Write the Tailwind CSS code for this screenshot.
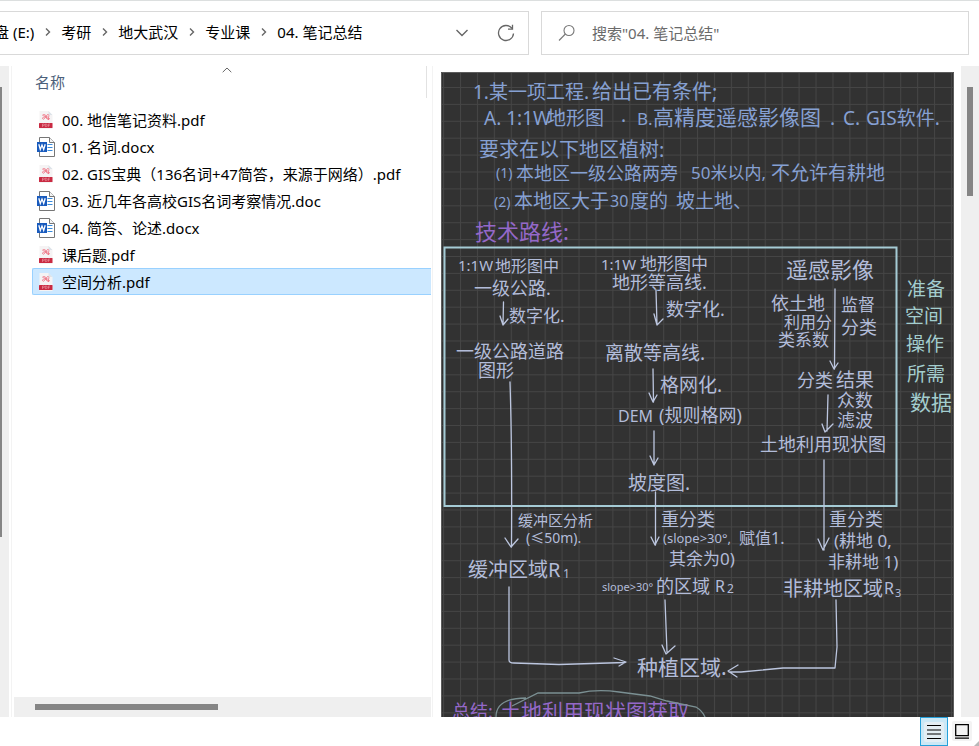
<!DOCTYPE html>
<html lang="zh-CN">
<head>
<meta charset="utf-8">
<meta name="viewport" content="width=device-width, initial-scale=1">
<title>04. 笔记总结</title>
<script src="https://cdn.jsdelivr.net/npm/@tailwindcss/browser@4"></script>
</head>
<body class="flex h-screen flex-col overflow-hidden border-t border-[#dcdfdf] bg-white font-['Noto_Sans','Noto_Sans_CJK_SC',sans-serif] text-[15px] leading-5 text-black">

<svg class="hidden" aria-hidden="true">
  <symbol id="pdf" viewBox="0 0 20 20">
    <path d="M3.500 1h9l4 4v14h-13z" fill="#f5f3f4"/>
    <path d="M12.500 1v4h4z" fill="#dde3e9"/>
    <path d="M6.500 5.500c2-2 4-.5 3 1.500s-2.500 3-3 1.500 3-2 5-1.500 2.500 2.500 1 2.500-3-3-1.500-4.500 2.500.5 1.500 2M7 4.500l5 5M12.500 7.500v2.500" fill="none" stroke="#ee7586" stroke-width=".9"/>
    <rect x="3" y="13" width="13.500" height="5" rx=".5" fill="#c92a42"/>
    <path d="M6.500 17v-3h1q1 0 1 .8t-1 .8h-1M9.300 14v2.600h.8q1 0 1-1.300t-1-1.300zM12.300 17v-3h1.700m-1.700 1.500h1.300" fill="none" stroke="#eda0ab" stroke-width=".6"/>
  </symbol>
  <symbol id="word" viewBox="0 0 20 20">
    <path d="M3.500.5h10l5 5v14h-15z" fill="#fff" stroke="#767676"/>
    <path d="M13.500.5v5h5" fill="#f4f4f4" stroke="#767676"/>
    <path d="M11.500 7.500h5M11.500 10.500h5M11.500 13.500h5" stroke="#3a8bdb"/>
    <rect x="1" y="5" width="10" height="10" fill="#185abd"/>
    <path d="M2.800 7.300l1.500 5.200L6 8l1.700 4.500 1.500-5.200" fill="none" stroke="#fff" stroke-width="1.300"/>
  </symbol>
  <symbol id="sep" viewBox="0 0 9 10"><path d="M3 1.500l3.500 3.500L3 8.500" fill="none" stroke="#666" stroke-width="1.400"/></symbol>
</svg>

<header class="flex shrink-0 gap-3 pt-[10px] pr-[10px]">
  <nav class="flex h-11 w-[529px] shrink-0 items-center border border-l-0 border-[#d9d9d9]" aria-label="地址栏">
    <div class="flex flex-1 items-center gap-[6px] pb-[2px] whitespace-nowrap">
      <button class="-ml-[6px] pr-[3px]">盘 (E:)</button>
      <svg class="h-[10px] w-[9px] shrink-0"><use href="#sep"/></svg>
      <button class="px-[3px]">考研</button>
      <svg class="h-[10px] w-[9px] shrink-0"><use href="#sep"/></svg>
      <button class="px-[3px]">地大武汉</button>
      <svg class="h-[10px] w-[9px] shrink-0"><use href="#sep"/></svg>
      <button class="px-[3px]">专业课</button>
      <svg class="h-[10px] w-[9px] shrink-0"><use href="#sep"/></svg>
      <button class="px-[3px]">04. 笔记总结</button>
    </div>
    <button class="mr-6 flex size-5 items-center justify-center" aria-label="历史记录">
      <svg class="h-2 w-[14px]" viewBox="0 0 14 8"><path d="M1.500 1l5.500 5.500L12.500 1" fill="none" stroke="#666" stroke-width="1.400"/></svg>
    </button>
    <button class="mr-3 flex size-5 items-center justify-center" aria-label="刷新">
      <svg class="size-[18px]" viewBox="0 0 18 18"><path d="M16.500 9.500A7.500 7.500 0 1 1 14.800 4.200M15.500.8v4.400h-4.500" fill="none" stroke="#666" stroke-width="1.300"/></svg>
    </button>
  </nav>
  <label class="flex h-11 flex-1 items-center gap-4 border border-[#d9d9d9] pl-4">
    <svg class="size-[18px] shrink-0" viewBox="0 0 18 18"><g fill="none" stroke="#777" stroke-width="1.100"><circle cx="11" cy="6.500" r="5"/><path d="M7.400 10L1 16.500"/></g></svg>
    <input class="w-full outline-none placeholder:text-[#6a6a6a]" type="text" placeholder='搜索"04. 笔记总结"' aria-label="搜索">
  </label>
</header>

<main class="flex min-h-0 flex-1 pt-[11px]">
  <div class="w-[9px] shrink-0 bg-[#efefef] pt-[21px]"><div class="h-[450px] w-[2px] bg-[#858585]"></div></div>

  <section class="ml-[2px] flex w-[422px] shrink-0 flex-col border-x border-[#f3f3f3] pr-px pl-[2px]">
    <div class="relative mr-1 flex h-8 items-center border-r border-[#e2e2e2] pl-[21px]">
      <button class="text-[#4c607a]">名称</button>
      <svg class="absolute top-[1px] left-[208px] h-[6px] w-[10px]" viewBox="0 0 10 6"><path d="M.7 5.200L5 1l4.300 4.200" fill="none" stroke="#666"/></svg>
    </div>
    <ul class="flex-1 pt-2 pl-[18px] whitespace-nowrap">
      <li><a href="#" class="flex h-[27px] items-center gap-[6px] border border-transparent pl-[3px]"><svg class="size-5"><use href="#pdf"/></svg>00. 地信笔记资料.pdf</a></li>
      <li><a href="#" class="flex h-[27px] items-center gap-[6px] border border-transparent pl-[3px]"><svg class="size-5"><use href="#word"/></svg>01. 名词.docx</a></li>
      <li><a href="#" class="flex h-[27px] items-center gap-[6px] border border-transparent pl-[3px]"><svg class="size-5"><use href="#pdf"/></svg>02. GIS宝典（136名词+47简答，来源于网络）.pdf</a></li>
      <li><a href="#" class="flex h-[27px] items-center gap-[6px] border border-transparent pl-[3px]"><svg class="size-5"><use href="#word"/></svg>03. 近几年各高校GIS名词考察情况.doc</a></li>
      <li><a href="#" class="flex h-[27px] items-center gap-[6px] border border-transparent pl-[3px]"><svg class="size-5"><use href="#word"/></svg>04. 简答、论述.docx</a></li>
      <li><a href="#" class="flex h-[27px] items-center gap-[6px] border border-transparent pl-[3px]"><svg class="size-5"><use href="#pdf"/></svg>课后题.pdf</a></li>
      <li><a href="#" class="flex h-[27px] items-center gap-[6px] rounded-l-[2px] border border-r-0 border-[#99d1ff] bg-[#cce8ff] pl-[3px]" aria-current="true"><svg class="size-5"><use href="#pdf"/></svg>空间分析.pdf</a></li>
    </ul>
    <div class="flex h-5 items-center bg-[#efefef] pl-[21px]"><div class="h-[6px] w-[183px] bg-[#858585]"></div></div>
  </section>

  <section class="ml-2 min-w-0 flex-1 pt-[6px] pr-[7px]" aria-label="预览">
    <svg class="block size-full bg-[#323232] font-['Noto_Sans','Noto_Sans_CJK_SC',sans-serif] font-normal" viewBox="441 72 513 645" preserveAspectRatio="xMidYMin slice">
      <defs><pattern id="grid" x="460" y="87" width="16.930" height="16.900" patternUnits="userSpaceOnUse"><path d="M0 .5H17M.5 0V17" stroke="#454545"/></pattern></defs>
      <rect x="441" y="72" width="513" height="645" fill="url(#grid)"/>
      <path d="M441.500 717V72.500h512V717" fill="none" stroke="#5c5c5c"/>

      <g fill="#86a0d2" font-size="19">
        <text x="473" y="99">1.某一项工程.</text><text x="592" y="99" font-size="20">给出已有条件;</text>
        <text x="484" y="125">A. 1:1W</text><text x="547" y="125">地形图</text><text x="621" y="122">.</text>
        <text x="637" y="125" font-size="17">B.</text><text x="653" y="125" font-size="21">高精度遥感影像图</text><text x="830" y="125">.</text>
        <text x="843" y="125">C.</text><text x="866" y="125">GIS软件.</text>
        <text x="479" y="157" font-size="20">要求在以下地区植树:</text>
        <text x="496" y="178" font-size="14">(1)</text><text x="516" y="180" font-size="18">本地区一级公路两旁</text><text x="691" y="179" font-size="17">50米以内,</text><text x="771" y="180">不允许有耕地</text>
        <text x="494" y="207" font-size="14">(2)</text><text x="514" y="208">本地区大于</text><text x="610" y="207" font-size="16">30</text><text x="630" y="208">度的</text><text x="676" y="208">坡土地、</text>
      </g>
      <g fill="#9468c8" font-size="22">
        <text x="475" y="240">技术路线:</text>
        <text x="452" y="718" font-size="18">总结:</text><text x="500" y="719" font-size="21">土地利用现状图获取</text>
      </g>

      <path d="M444.500 247.500H896.500V506H444.500z" fill="none" stroke="#a5cbd5" stroke-width="2"/>

      <g fill="#b2bcd9" font-size="18">
        <text x="458" y="271" font-size="15">1:1W</text><text x="495" y="272" font-size="16">地形图中</text>
        <text x="474" y="295" font-size="18">一级公路.</text>
        <text x="509" y="322" font-size="17">数字化.</text>
        <text x="456" y="358">一级公路道路</text>
        <text x="478" y="377">图形</text>
        <text x="518" y="526" font-size="15">缓冲区分析</text>
        <text x="526" y="543" font-size="14">(≤50m).</text>
        <text x="468" y="577" font-size="20">缓冲区域R</text><text x="563" y="578" font-size="12">1</text>

        <text x="601" y="270" font-size="15">1:1W</text><text x="640" y="270" font-size="17">地形图中</text>
        <text x="612" y="289">地形等高线.</text>
        <text x="666" y="316">数字化.</text>
        <text x="605" y="360" font-size="19">离散等高线.</text>
        <text x="660" y="392" font-size="19">格网化.</text>
        <text x="618" y="422" font-size="16">DEM</text><text x="659" y="422">(规则格网)</text>
        <text x="628" y="490" font-size="19">坡度图.</text>
        <text x="661" y="526">重分类</text>
        <text x="663" y="543" font-size="13">(slope&gt;30°,</text><text x="739" y="544" font-size="16">赋值1.</text>
        <text x="669" y="565" font-size="17">其余为0)</text>
        <text x="602" y="591" font-size="11">slope&gt;30°</text><text x="656" y="593">的区域</text><text x="715" y="592" font-size="16">R</text><text x="727" y="593" font-size="12">2</text>
        <text x="637" y="675" font-size="21">种植区域.</text>

        <text x="786" y="278" font-size="22">遥感影像</text>
        <text x="771" y="310">依土地</text><text x="784" y="328" font-size="16">利用分</text><text x="778" y="346" font-size="17">类系数</text>
        <text x="841" y="311" font-size="17">监督</text><text x="841" y="334" font-size="18">分类</text>
        <text x="797" y="387">分类</text><text x="836" y="387" font-size="19">结果</text>
        <text x="837" y="407">众数</text><text x="837" y="427">滤波</text>
        <text x="760" y="451">土地利用现状图</text>
        <text x="829" y="526">重分类</text>
        <text x="834" y="547" font-size="17">(耕地 0,</text>
        <text x="828" y="568" font-size="17">非耕地 1)</text>
        <text x="783" y="596" font-size="20">非耕地区域</text><text x="884" y="594" font-size="16">R</text><text x="895" y="597" font-size="11">3</text>
      </g>

      <g fill="#a3cdce" font-size="19">
        <text x="907" y="296">准备</text><text x="905" y="323">空间</text><text x="906" y="351">操作</text><text x="907" y="381">所需</text><text x="910" y="410" font-size="21">数据</text>
      </g>

      <g fill="none" stroke="#bcc6df" stroke-width="1.300" stroke-linecap="round" stroke-linejoin="round">
        <path d="M503.500 302l-.5 23M500 316l3 9 5-6"/>
        <path d="M510 382c1 30 2 90 1.500 165M505 538l6 9 7-8"/>
        <path d="M509 587v73q0 3 5 3l45 1.500 66-2M614 658l12 4-7 4"/>
        <path d="M656 290l1 35M654 314l3 11 6-6"/>
        <path d="M653 369l.5 33M649 393l4 9 4-7"/>
        <path d="M654 431v34M650 456l4 9 4-7"/>
        <path d="M655.500 492v53M651 537l4 8 4-8"/>
        <path d="M665 600l2 52M662 645l4 9 9-8"/>
        <path d="M835 289l-.5 80M830 361l4 8 4-6"/>
        <path d="M828 395l-1 36M822 424l3 8 8-8"/>
        <path d="M824 460v90M818 539l5 11 6-12"/>
        <path d="M836 600l1 47-2 21h-52l-42 4h-12M738 665l-10 6 9 6"/>
      </g>
      <path d="M496 717c0-13 11-19 30-19M512 706l26-13h41q18-4 40-1l31 4 17 5 29 6q8 5 10 13" fill="none" stroke="#7b9093" stroke-width="1.300"/>
    </svg>
  </section>

  <div class="flex w-[18px] shrink-0 justify-center bg-[#efefef] pt-[21px]"><div class="h-[109px] w-[6px] bg-[#858585]"></div></div>
</main>

<footer class="relative flex h-[29px] shrink-0 items-start justify-end gap-1 pr-[7px]">
  <button class="flex h-[29px] w-7 items-center justify-center border border-[#26a0da] bg-[#cbe8f6]" aria-label="详细信息" aria-pressed="true">
    <svg class="h-5 w-5 rounded-xs bg-[#e4eef4]" viewBox="0 0 20 20"><path d="M3 3.500h14M3 8h14M3 12h14M3 16.500h14" stroke="#000" stroke-width="1.100"/></svg>
  </button>
  <button class="mt-1 flex size-5 items-center justify-center rounded-xs bg-[#f3f3f3]" aria-label="大缩略图">
    <svg class="h-4 w-4" viewBox="0 0 16 16"><path d="M1.700 1.700h12.600v11H1.700zM1 15.200h14" fill="none" stroke="#000" stroke-width="1.300"/></svg>
  </button>
  <svg class="absolute right-0 bottom-0 size-[6px]" viewBox="0 0 6 6"><path d="M6 1v5H1z" fill="#b8b8b8"/></svg>
</footer>
</body>
</html>
